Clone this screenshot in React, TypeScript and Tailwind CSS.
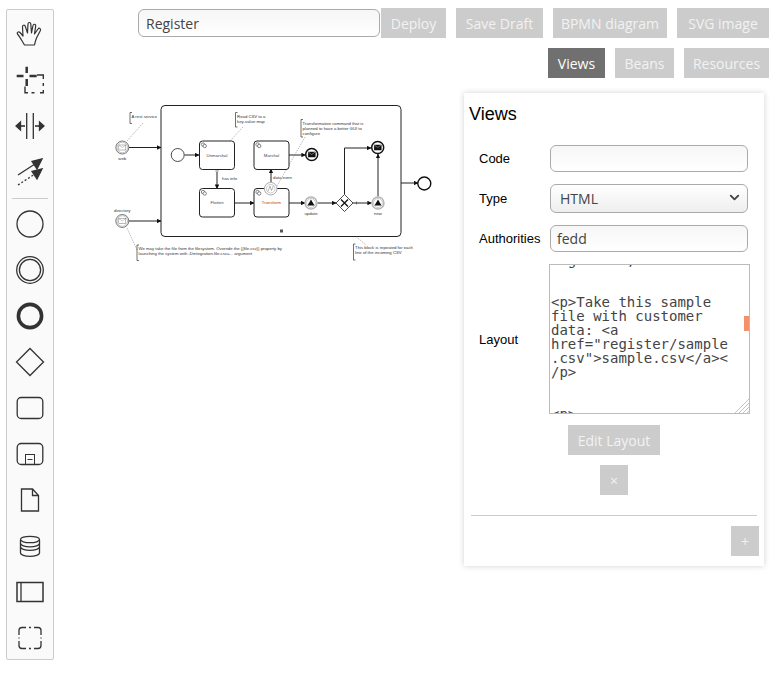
import { useEffect, useRef } from 'react'
import { ChevronDown } from 'lucide-react'

const uiFont = "font-['Open_Sans','Noto_Sans',sans-serif]"
const greyButton = `h-[30px] flex items-center justify-center bg-[#cccccc] text-[#f2f2f2] text-[14px] ${uiFont}`

const layoutSource = `Registers,


<p>Take this sample
file with customer
data: <a
href="register/sample
.csv">sample.csv</a><
/p>


<p>
Then upload it here
using the form below
and check the result
on the next page.
</p>`

const iconClass = 'block fill-none stroke-[#333333]'

function Icon({ children }: { children: React.ReactNode }) {
  return (
    <svg width="30" height="30" viewBox="0 0 30 30" className={iconClass} strokeWidth="1.3">
      {children}
    </svg>
  )
}

function Palette() {
  return (
    <div className="w-[48px] h-[651px] shrink-0 bg-[#fafafa] border border-[#cccccc] rounded-[2px] pt-[8px] flex flex-col items-center">
      <div className="flex flex-col items-center gap-[16px]">
        <Icon>
          <path
            d="M9.500 27C7 23 5 19 2.500 16c-1-1.500 1-3 2.500-1.500l3 3.500L7.500 9c-.3-2 2.200-2.500 2.800-.6l2.200 6.600L13 6c0-2 2.800-2 2.800 0l.7 9L18 7.500c.4-1.900 3-1.500 2.700.4L19.500 16l3.500-5c1-1.600 3.200-.4 2.400 1.400L21.500 20c-1 2.500-1.500 4.500-2 7z"
            strokeWidth="1.200"
            strokeLinejoin="round"
          />
        </Icon>
        <Icon>
          <path d="M1.700 12H8.500M14.500 12H21.700M11.700 2.700V9M11.700 15V22" strokeWidth="2.500" />
          <path d="M22 11H28.300V15M28.300 19V22M28.300 26V28.700H25M19.500 28.700H16.500M13 28.700H10V22.500" strokeWidth="1.400" />
        </Icon>
        <Icon>
          <path d="M11.700 3V29M18.300 3V29" />
          <path d="M10 16H4" strokeWidth="1.600" />
          <path d="M5.500 12 1 16l4.500 4z" fill="#333333" />
          <path d="M20 16H26" strokeWidth="1.600" />
          <path d="M24.500 12 29 16l-4.500 4z" fill="#333333" />
        </Icon>
        <Icon>
          <path d="M3 19 23 6" />
          <path d="M27 3 17 5.500l5 7.500z" fill="#333333" />
          <path d="M3 29 23 16" strokeDasharray="2 2" />
          <path d="M27 13 17 15.500l5 7.500z" fill="#333333" />
        </Icon>
      </div>
      <div className="w-[36px] h-px bg-[#cccccc] mt-[12px] mb-[10px]" />
      <div className="flex flex-col items-center gap-[16px]">
        <Icon>
          <circle cx="15" cy="15" r="13" />
        </Icon>
        <Icon>
          <circle cx="15" cy="15" r="13.300" />
          <circle cx="15" cy="15" r="10.600" />
        </Icon>
        <Icon>
          <circle cx="15" cy="15" r="11.600" strokeWidth="3.600" />
        </Icon>
        <Icon>
          <path d="M15 1.500 28.500 15 15 28.500 1.500 15z" />
        </Icon>
        <Icon>
          <rect x="2.200" y="4.500" width="25.600" height="21" rx="4" />
        </Icon>
        <Icon>
          <rect x="2.200" y="4.500" width="25.600" height="21" rx="4" />
          <rect x="10.500" y="15.500" width="9" height="10" strokeWidth="1" />
          <path d="M12.500 20.500h5" strokeWidth="1" />
        </Icon>
        <Icon>
          <path d="M6.500 4h11l6 6.500v15.500h-17z" />
          <path d="M17.500 4v6.500h6" />
        </Icon>
        <Icon>
          <path d="M5.500 9v13c0 1.800 4.300 3.300 9.500 3.300s9.500-1.500 9.500-3.300V9" />
          <ellipse cx="15" cy="8.500" rx="9.500" ry="3.200" />
          <path d="M5.500 12.500c0 1.800 4.300 3.300 9.500 3.300s9.500-1.500 9.500-3.300M5.500 16c0 1.800 4.300 3.300 9.500 3.300s9.500-1.500 9.500-3.300" />
        </Icon>
        <Icon>
          <rect x="2" y="5.500" width="26" height="19" strokeWidth="1.500" />
          <path d="M6 5.500v19" />
        </Icon>
        <Icon>
          <path d="M4 12V7.500a3 3 0 0 1 3-3h4M19 4.500h4a3 3 0 0 1 3 3V12M26 18v4.500a3 3 0 0 1-3 3h-4M11 25.500H7a3 3 0 0 1-3-3V18M14 4.500h2M26 14.500v1M14 25.500h2M4 14.500v1" />
        </Icon>
      </div>
    </div>
  )
}

function Envelope({ x, y, filled }: { x: number; y: number; filled?: boolean }) {
  return (
    <g>
      <rect
        x={x - 3.500}
        y={y - 2.500}
        width="7"
        height="5"
        fill={filled ? '#111111' : '#ffffff'}
        stroke={filled ? '#111111' : '#777777'}
        strokeWidth="0.500"
      />
      <path d={`M${x - 3.500} ${y - 2.500}l3.500 2.500 3.500-2.500`} fill="none" stroke={filled ? '#ffffff' : '#777777'} strokeWidth="0.400" />
    </g>
  )
}

function Task({ x, y, label, color = '#444444' }: { x: number; y: number; label: string; color?: string }) {
  return (
    <g>
      <rect x={x} y={y} width="35" height="28.500" rx="3" fill="#ffffff" stroke="#222222" strokeWidth="1" />
      <circle cx={x + 3.500} cy={y + 3.500} r="1.700" fill="#ffffff" stroke="#666666" strokeWidth="0.800" />
      <circle cx={x + 5.200} cy={y + 5} r="1.700" fill="#ffffff" stroke="#666666" strokeWidth="0.800" />
      <text x={x + 17.500} y={y + 15.500} textAnchor="middle" fontSize="4.300" fill={color} stroke="none">
        {label}
      </text>
    </g>
  )
}

function ThrowEvent({ x, y }: { x: number; y: number }) {
  return (
    <g>
      <circle cx={x} cy={y} r="6" fill="#ffffff" stroke="#b5b5b5" strokeWidth="1.400" />
      <circle cx={x} cy={y} r="4.500" fill="#ffffff" stroke="#999999" strokeWidth="0.500" />
      <path d={`M${x} ${y - 3.500}l3.500 6h-7z`} fill="#111111" />
    </g>
  )
}

function Note({ x, y, h, lines }: { x: number; y: number; h: number; lines: string[] }) {
  return (
    <g>
      <path d={`M${x + 2} ${y}h-2v${h}h2`} fill="none" stroke="#333333" strokeWidth="0.700" />
      {lines.map((line, i) => (
        <text key={line} x={x + 1.600} y={y + 5 + i * 5.200} fontSize="4.250" fill="#333333">
          {line}
        </text>
      ))}
    </g>
  )
}

function Diagram() {
  const dashed = { stroke: '#777777', strokeWidth: 0.5, strokeDasharray: '1.500 1', fill: 'none' }
  return (
    <svg width="330" height="180" viewBox="110 93 330 180" className="block shrink-0 ml-[56px]" fontFamily="'Liberation Sans', sans-serif">
      <defs>
        <marker id="arrow" viewBox="0 0 6 6" refX="5.500" refY="3" markerWidth="4.500" markerHeight="4.500" orient="auto" markerUnits="userSpaceOnUse">
          <path d="M0 0 6 3 0 6z" fill="#111111" />
        </marker>
      </defs>

      <rect x="161" y="105.500" width="240" height="131" rx="4" fill="#ffffff" stroke="#222222" strokeWidth="1" />

      <g fill="none" stroke="#222222" strokeWidth="1" markerEnd="url(#arrow)">
        <path d="M129 147.500H161" />
        <path d="M129 221H161" />
        <path d="M184.500 155H199" />
        <path d="M217 172V188.500" />
        <path d="M234.500 203H254" />
        <path d="M271 182V169" />
        <path d="M289 155H305.500" />
        <path d="M289 203H305" />
        <path d="M317.500 203H336" />
        <path d="M344.500 194.500V148H371" />
        <path d="M352.500 203H371.500" />
        <path d="M378 196.500V154" />
        <path d="M401 183H418" />
      </g>
      <circle cx="217" cy="171" r="1.200" fill="#ffffff" stroke="#555555" strokeWidth="0.500" />
      <path d="M356.500 201.500v3" stroke="#222222" strokeWidth="0.500" />

      <path d="M143 123 127 141" {...dashed} />
      <path d="M243 127 230 141" {...dashed} />
      <path d="M305 137 277 186" {...dashed} />
      <path d="M127 228 137 250" {...dashed} />
      <path d="M356 236.500 366 245" {...dashed} />

      <circle cx="122.300" cy="147.500" r="6.500" fill="#ffffff" stroke="#222222" strokeWidth="0.600" />
      <circle cx="122.300" cy="147.500" r="5.300" fill="#ffffff" stroke="#666666" strokeWidth="0.400" />
      <Envelope x={122.300} y={147.500} />
      <text x="122.300" y="160" textAnchor="middle" fontSize="4.300" fill="#333333">web</text>

      <circle cx="122.300" cy="221" r="6.500" fill="#ffffff" stroke="#222222" strokeWidth="0.600" />
      <circle cx="122.300" cy="221" r="5.300" fill="#ffffff" stroke="#666666" strokeWidth="0.400" />
      <Envelope x={122.300} y={221} />
      <text x="122.300" y="212" textAnchor="middle" fontSize="4.300" fill="#333333">directory</text>

      <circle cx="177.700" cy="155" r="6.500" fill="#ffffff" stroke="#222222" strokeWidth="0.800" />

      <Task x={199.500} y={141} label="Unmarshal" />
      <Task x={199.500} y={188.500} label="Flatten" />
      <Task x={254} y={141} label="Marshal" />
      <Task x={254} y={188.500} label="Transform" color="#c2410c" />

      <text x="222" y="180" fontSize="4.300" fill="#333333">has info</text>
      <text x="273" y="179" fontSize="4.300" fill="#333333">data even</text>

      <circle cx="270.700" cy="188.700" r="6.300" fill="#ffffff" stroke="#aaaaaa" strokeWidth="1" />
      <circle cx="270.700" cy="188.700" r="4.300" fill="#ffffff" stroke="#999999" strokeWidth="0.500" />
      <path d="M268 191.500 270 186l1.500 4.500 2-5" fill="none" stroke="#888888" strokeWidth="0.600" />

      <circle cx="311.700" cy="154.500" r="6" fill="#ffffff" stroke="#111111" strokeWidth="1.500" />
      <Envelope x={311.700} y={154.500} filled />

      <ThrowEvent x={311} y={203} />
      <text x="311" y="215" textAnchor="middle" fontSize="4.300" fill="#333333">update</text>

      <path d="M344.500 194.500 353 203 344.500 211.500 336 203z" fill="#ffffff" stroke="#222222" strokeWidth="0.800" />
      <path d="M341 199.500 348 206.500M348 199.500 341 206.500" stroke="#111111" strokeWidth="1.300" />

      <circle cx="377.700" cy="147.500" r="6" fill="#ffffff" stroke="#111111" strokeWidth="1.500" />
      <Envelope x={377.700} y={147.500} filled />

      <ThrowEvent x={378} y={203} />
      <text x="378" y="215" textAnchor="middle" fontSize="4.300" fill="#333333">new</text>

      <circle cx="424.300" cy="183.500" r="6.500" fill="#ffffff" stroke="#111111" strokeWidth="1.400" />
      <rect x="280" y="229.500" width="3" height="3" fill="#555555" />

      <Note x={130} y={112.500} h={11} lines={['A rest service']} />
      <Note x={235.500} y={112.500} h={14.500} lines={['Read CSV to a', 'key-value map']} />
      <Note x={301} y={119.500} h={17.500} lines={['Transformation command that is', 'planned to have a better GUI to', 'configure']} />
      <Note x={137} y={245} h={15.500} lines={['We may take the file from the filesystem. Override the {{file.csv}} property by', 'launching the system with -Dintegration.file.csv=... argument']} />
      <Note x={353.500} y={244} h={16} lines={['This block is repeated for each', 'line of the incoming CSV']} />
    </svg>
  )
}

function FieldRow({ label, children }: { label: string; children: React.ReactNode }) {
  return (
    <div className="flex items-center pl-[15px]">
      <label className="w-[71px] shrink-0 text-[13px] text-black font-['Liberation_Sans',sans-serif]">{label}</label>
      {children}
    </div>
  )
}

const fieldClass = `w-[198px] border border-[#aaaaaa] rounded-[6px] text-[14px] text-[#444444] outline-none ${uiFont}`

function ViewsPanel() {
  const layoutRef = useRef<HTMLTextAreaElement>(null)

  useEffect(() => {
    if (layoutRef.current) layoutRef.current.scrollTop = 13
  }, [])

  return (
    <div className="w-[300px] h-[473px] shrink-0 ml-[24px] bg-white shadow-[0_0_6px_rgba(0,0,0,0.18)] flex flex-col">
      <h2 className="pl-[5px] pt-[11px] h-[52px] text-[18px] leading-[21px] text-black font-['Liberation_Sans',sans-serif]">Views</h2>
      <div className="flex flex-col gap-[12px]">
        <FieldRow label="Code">
          <input className={`${fieldClass} h-[27px] px-[10px] bg-linear-to-b from-[#f6f6f6] to-white`} />
        </FieldRow>
        <FieldRow label="Type">
          <div className="relative">
            <select defaultValue="HTML" className={`${fieldClass} block h-[29px] pl-[9px] appearance-none bg-linear-to-b from-white to-[#eeeeee]`}>
              <option>HTML</option>
              <option>JSON</option>
            </select>
            <ChevronDown size={15} strokeWidth={3} color="#444444" className="absolute right-[6px] top-[6px] pointer-events-none" />
          </div>
        </FieldRow>
        <FieldRow label="Authorities">
          <input defaultValue="fedd" className={`${fieldClass} h-[27px] px-[6px] bg-linear-to-b from-[#f6f6f6] to-white`} />
        </FieldRow>
        <div className="flex items-center pl-[15px]">
          <label className="w-[70px] shrink-0 mt-[2px] text-[13px] text-black font-['Liberation_Sans',sans-serif]">Layout</label>
          <div className="relative">
            <textarea
              ref={layoutRef}
              readOnly
              value={layoutSource}
              className="block w-[201px] h-[150px] border border-[#bbbbbb] p-[1px] pr-[16px] resize-none text-[14px] leading-[14px] text-[#444444] outline-none [scrollbar-width:none] font-['DejaVu_Sans_Mono',monospace]"
            />
            <div className="absolute right-[1px] top-[52px] w-[5px] h-[15px] bg-[#f4916a]" />
            <svg width="14" height="14" viewBox="0 0 14 14" className="absolute right-[1px] bottom-[1px] stroke-[#c4c4c4]">
              <path d="M14 0 0 14M14 4 4 14M14 8 8 14M14 12 12 14" strokeWidth="1" />
            </svg>
          </div>
        </div>
      </div>
      <div className="flex flex-col items-center">
        <button className={`${greyButton} w-[92px] mt-[11px]`}>Edit Layout</button>
        <button className={`${greyButton} w-[28px] mt-[10px] text-[12px]`}>×</button>
      </div>
      <div className="h-px bg-[#cccccc] mx-[7px] mt-[20px]" />
      <div className="flex justify-end pr-[5px] mt-[10px]">
        <button className={`${greyButton} w-[28px]`}>+</button>
      </div>
    </div>
  )
}

export default function App() {
  return (
    <div className="min-h-screen bg-white flex items-start pl-[6px] pt-[9px]">
      <Palette />
      <div className="w-[715px] flex flex-col -mt-px">
        <div className="flex items-center pl-[84px]">
          <input
            defaultValue="Register"
            className={`w-[242px] h-[28px] px-[7px] border border-[#aaaaaa] rounded-[6px] bg-linear-to-b from-[#f6f6f6] to-white text-[14px] text-[#444444] outline-none ${uiFont}`}
          />
          <button className={`${greyButton} w-[65px] ml-px`}>Deploy</button>
          <button className={`${greyButton} w-[87px] ml-[10px]`}>Save Draft</button>
          <button className={`${greyButton} w-[114px] ml-[10px]`}>BPMN diagram</button>
          <button className={`${greyButton} w-[92px] ml-[10px]`}>SVG image</button>
        </div>
        <div className="flex justify-end gap-[10px] mt-[10px]">
          <button className={`${greyButton} w-[57px] !bg-[#707070] !text-white`}>Views</button>
          <button className={`${greyButton} w-[59px]`}>Beans</button>
          <button className={`${greyButton} w-[85px]`}>Resources</button>
        </div>
        <div className="flex items-start mt-[15px]">
          <Diagram />
          <ViewsPanel />
        </div>
      </div>
    </div>
  )
}
